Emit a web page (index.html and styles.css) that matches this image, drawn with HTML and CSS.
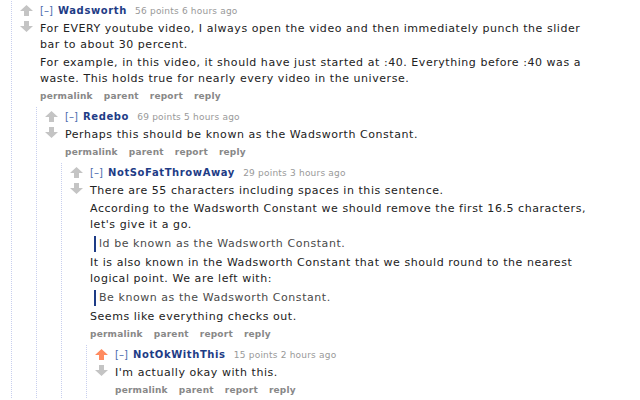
FILE: index.html
```html
<!DOCTYPE html>
<html lang="en">

<head>
    <meta charset="UTF-8">
    <title>comments</title>
    <link rel="stylesheet" href="styles.css">
</head>

<body>
    <div class="commentarea">
        <div class="comment">
            <div class="midcol">
                <svg class="arrow" viewBox="0 0 13 11"><path d="M6.5 0 L13 6 H9 V11 H4 V6 H0 Z" /></svg>
                <svg class="arrow down" viewBox="0 0 13 11"><path d="M6.5 11 L13 5 H9 V0 H4 V5 H0 Z" /></svg>
            </div>
            <div class="entry">
                <p class="tagline"><a class="expand">[–]</a> <a class="author">Wadsworth</a> <span class="score">56 points 6 hours ago</span></p>
                <div class="md">
                    <p>For EVERY youtube video, I always open the video and then immediately punch the slider bar to about 30 percent.</p>
                    <p>For example, in this video, it should have just started at :40. Everything before :40 was a waste. This holds true for nearly every video in the universe.</p>
                </div>
                <ul class="buttons">
                    <li>permalink</li>
                    <li>parent</li>
                    <li>report</li>
                    <li>reply</li>
                </ul>
            </div>
            <div class="child">
                <div class="comment">
                    <div class="midcol">
                        <svg class="arrow" viewBox="0 0 13 11"><path d="M6.5 0 L13 6 H9 V11 H4 V6 H0 Z" /></svg>
                        <svg class="arrow down" viewBox="0 0 13 11"><path d="M6.5 11 L13 5 H9 V0 H4 V5 H0 Z" /></svg>
                    </div>
                    <div class="entry">
                        <p class="tagline"><a class="expand">[–]</a> <a class="author">Redebo</a> <span class="score">69 points 5 hours ago</span></p>
                        <div class="md">
                            <p>Perhaps this should be known as the Wadsworth Constant.</p>
                        </div>
                        <ul class="buttons">
                            <li>permalink</li>
                            <li>parent</li>
                            <li>report</li>
                            <li>reply</li>
                        </ul>
                    </div>
                    <div class="child">
                        <div class="comment">
                            <div class="midcol">
                                <svg class="arrow" viewBox="0 0 13 11"><path d="M6.5 0 L13 6 H9 V11 H4 V6 H0 Z" /></svg>
                                <svg class="arrow down" viewBox="0 0 13 11"><path d="M6.5 11 L13 5 H9 V0 H4 V5 H0 Z" /></svg>
                            </div>
                            <div class="entry">
                                <p class="tagline"><a class="expand">[–]</a> <a class="author">NotSoFatThrowAway</a> <span class="score">29 points 3 hours ago</span></p>
                                <div class="md">
                                    <p>There are 55 characters including spaces in this sentence.</p>
                                    <p>According to the Wadsworth Constant we should remove the first 16.5 characters, let's give it a go.</p>
                                    <blockquote>ld be known as the Wadsworth Constant.</blockquote>
                                    <p>It is also known in the Wadsworth Constant that we should round to the nearest logical point. We are left with:</p>
                                    <blockquote>Be known as the Wadsworth Constant.</blockquote>
                                    <p>Seems like everything checks out.</p>
                                </div>
                                <ul class="buttons">
                                    <li>permalink</li>
                                    <li>parent</li>
                                    <li>report</li>
                                    <li>reply</li>
                                </ul>
                            </div>
                            <div class="child">
                                <div class="comment">
                                    <div class="midcol">
                                        <svg class="arrow upmod" viewBox="0 0 13 11"><path d="M6.5 0 L13 6 H9 V11 H4 V6 H0 Z" /></svg>
                                        <svg class="arrow down" viewBox="0 0 13 11"><path d="M6.5 11 L13 5 H9 V0 H4 V5 H0 Z" /></svg>
                                    </div>
                                    <div class="entry">
                                        <p class="tagline"><a class="expand">[–]</a> <a class="author">NotOkWithThis</a> <span class="score">15 points 2 hours ago</span></p>
                                        <div class="md">
                                            <p>I'm actually okay with this.</p>
                                        </div>
                                        <ul class="buttons">
                                            <li>permalink</li>
                                            <li>parent</li>
                                            <li>report</li>
                                            <li>reply</li>
                                        </ul>
                                    </div>
                                </div>
                            </div>
                        </div>
                    </div>
                </div>
            </div>
        </div>
    </div>
</body>

</html>
```

FILE: styles.css
```css
body {
    margin: 0;
    padding: 0;
    background: #fff;
    font-family: 'DejaVu Sans', Verdana, sans-serif;
    color: #222;
}

.commentarea {
    padding: 1px 40px 0 11px;
}

/* one comment = arrows + entry, children underneath */
.comment {
    display: grid;
    grid-template-columns: 14px 1fr;
    column-gap: 6px;
    padding: 2px 0 0 8px;
    border-left: 1px dotted #c8cfee;
}

.midcol {
    display: flex;
    flex-direction: column;
    gap: 5px;
    padding-top: 2px;
}

.arrow {
    width: 13px;
    height: 11px;
    fill: #c4c4c4;
}

.arrow.upmod {
    fill: #ff8b60;
}

.tagline {
    margin: 0;
    font-size: 10px;
    line-height: 16px;
    color: #888;
}

.expand {
    color: #4a6aae;
    margin-right: 2px;
}

.author {
    color: #1e3c86;
    font-weight: bold;
    letter-spacing: 0.6px;
    margin-right: 5px;
}

.score {
    font-size: 9px;
    letter-spacing: 0.2px;
    color: #999;
}

.md {
    margin-top: 2px;
    font-size: 11px;
    letter-spacing: 0.55px;
    line-height: 16px;
    color: #222;
}

.md p {
    margin: 0 0 2px;
}

.md blockquote {
    margin: 3px 0 3px 4px;
    padding-left: 3px;
    border-left: 2px solid #1e3c86;
    color: #4a4a4a;
}

.md > :last-child {
    margin-bottom: 0;
}

.buttons {
    list-style: none;
    margin: 1px 0 0;
    padding: 0;
    display: flex;
    gap: 11px;
    font-size: 9px;
    font-weight: bold;
    letter-spacing: 0.2px;
    line-height: 16px;
    color: #888;
}

.child {
    grid-column: 1 / -1;
    margin: 3px 0 0 16px;
}
```
